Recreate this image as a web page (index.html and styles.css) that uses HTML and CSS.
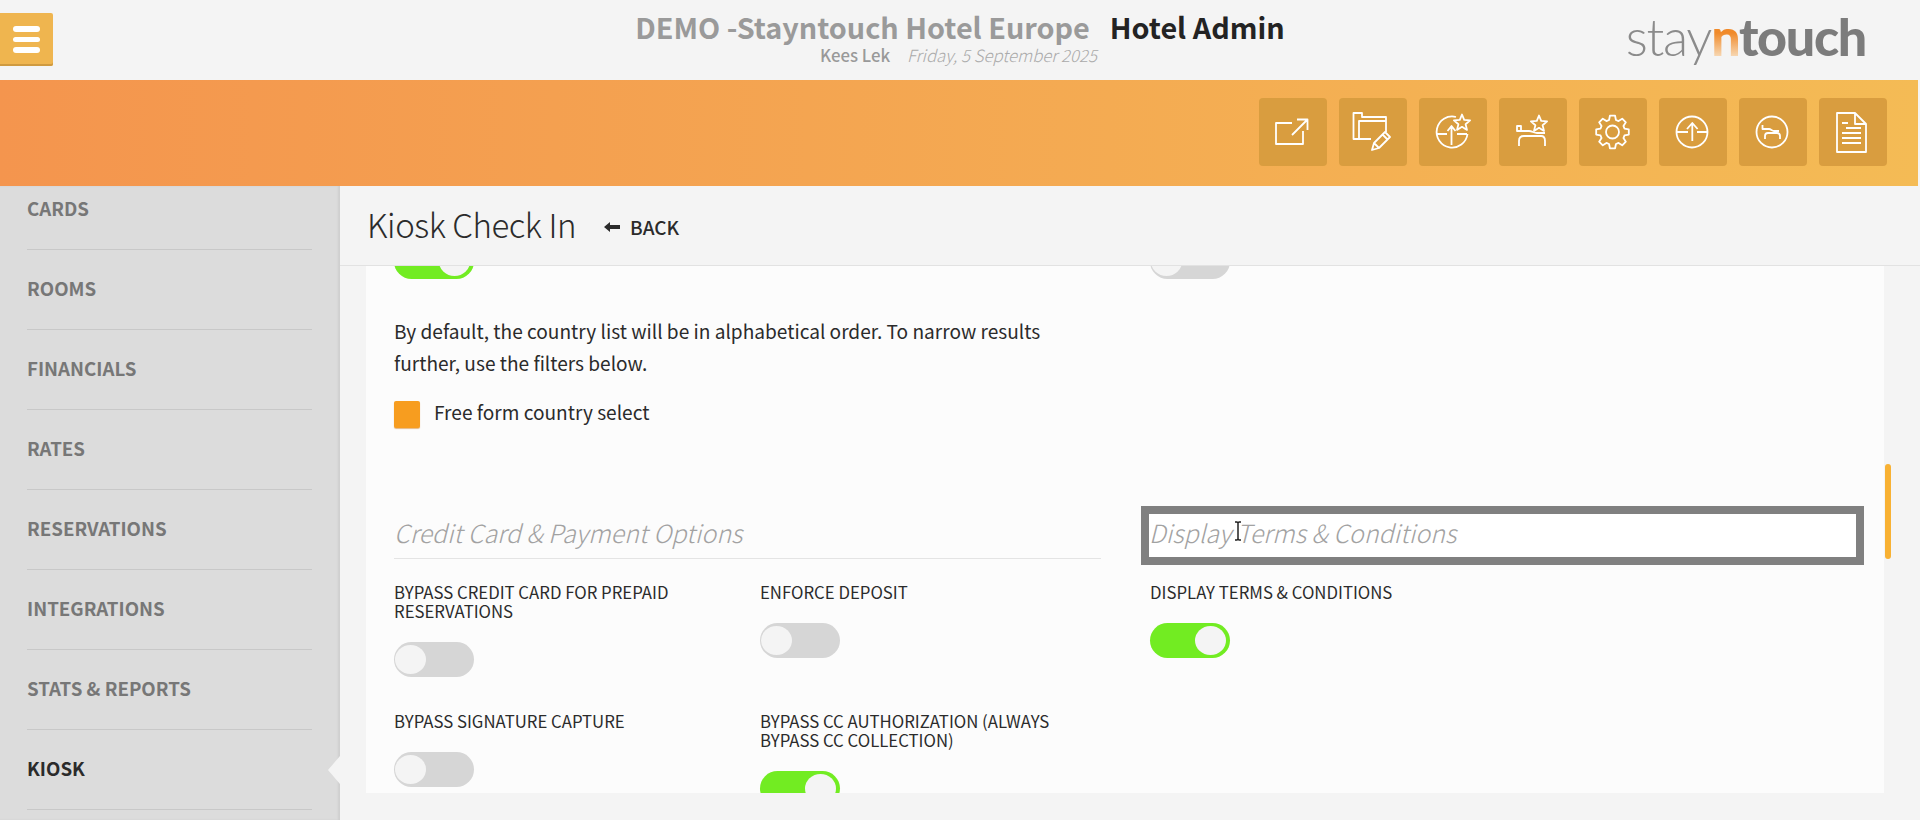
FILE: index.html
```html
<!DOCTYPE html>
<html lang="en">
<head>
<meta charset="utf-8">
<title>Kiosk Check In</title>
<link rel="stylesheet" href="styles.css">
</head>
<body>
<header class="topbar">
  <div class="topbar-left">
    <button class="menu-btn" aria-label="Menu"><span></span><span></span><span></span></button>
  </div>
  <div class="titles">
    <div class="title-line"><span class="hotel">DEMO -Stayntouch Hotel Europe</span><span class="app">Hotel Admin</span></div>
    <div class="sub-line"><span class="user">Kees Lek</span><span class="date">Friday, 5 September 2025</span></div>
  </div>
  <div class="logo"><span class="logo-stay">stay</span><span class="logo-n">n</span><span class="logo-touch">touch</span></div>
</header>

<div class="band">
  <a class="tool"><svg viewBox="0 0 68 68"><path d="M33 25H17v21h27V33M33 37 48 22M38 21.500h10.500V32"/></svg></a>
  <a class="tool"><svg viewBox="0 0 68 68"><path d="M32 41H14.500V15H23v4h24v15M20 41V23h27"/><path d="M33 52l2-7 11-11 5 5-11 11zM35 45l5 5M43.500 36.500l5 5"/></svg></a>
  <a class="tool"><svg viewBox="0 0 68 68"><path d="M37 19A15.500 15.500 0 1 0 48.500 36M18 36h10M38 36h10M32.500 47V28M28.500 33l4-5 4 5"/><path d="M43 16.500l2.200 5.400 5.900.5-4.500 3.800 1.400 5.700-5-3.100-5 3.100 1.400-5.700-4.500-3.800 5.900-.5z"/></svg></a>
  <a class="tool"><svg viewBox="0 0 68 68"><path d="M18 28h4v5h-4zM22 33h8c3 0 5 2 8 2h8M20 48v-5c0-3 2-5 5-5h17c3 0 4 2 4 5v5"/><path d="M40 17.500l2.200 5.400 5.900.5-4.500 3.800 1.400 5.700-5-3.100-5 3.100 1.400-5.700-4.500-3.800 5.900-.5z"/></svg></a>
  <a class="tool"><svg viewBox="0 0 68 68"><circle cx="33.500" cy="34" r="6.500"/><path d="M30.050 21.980 30.920 17.700H36.080L36.950 21.980 39.560 23.070 43.200 20.650 46.850 24.300 44.430 27.940 45.520 30.550 49.800 31.420V36.580L45.520 37.450 44.430 40.060 46.850 43.700 43.200 47.350 39.560 44.930 36.950 46.020 36.080 50.300H30.920L30.050 46.020 27.440 44.930 23.800 47.350 20.150 43.700 22.570 40.060 21.480 37.450 17.200 36.580V31.420L21.480 30.550 22.570 27.940 20.150 24.300 23.800 20.650 27.440 23.070z"/></svg></a>
  <a class="tool"><svg viewBox="0 0 68 68"><circle cx="33" cy="34" r="15.500"/><path d="M18 34h11M38 34h11M33.300 43V25.500M28 31l5.300-6 5.300 6"/></svg></a>
  <a class="tool"><svg viewBox="0 0 68 68"><circle cx="33" cy="34" r="15.500"/><path d="M23.500 27v4h3M24 31h6c2 0 3 2 5 2h5M26 41v-3c0-2 1-3 3-3h9c2 0 3 1 3 3v3"/></svg></a>
  <a class="tool"><svg viewBox="0 0 68 68"><path d="M18 15h18l11 11v28H18zM36 15v11h11M23 25h6M27 30h15M23 35h19M23 40h19M23 45h19"/></svg></a>
</div>

<div class="main">
  <nav class="sidebar">
    <a class="nav-item">CARDS</a>
    <a class="nav-item">ROOMS</a>
    <a class="nav-item">FINANCIALS</a>
    <a class="nav-item">RATES</a>
    <a class="nav-item">RESERVATIONS</a>
    <a class="nav-item">INTEGRATIONS</a>
    <a class="nav-item">STATS &amp; REPORTS</a>
    <a class="nav-item active">KIOSK</a>
  </nav>
  <section class="page">
    <div class="page-head">
      <h1>Kiosk Check In</h1>
      <a class="back"><svg class="back-arrow" viewBox="0 0 16 12"><path d="M0 6 6 1v3h10v4H6v3z"/></svg>BACK</a>
    </div>
    <div class="card">
      <div class="card-scroll">
        <div class="columns top-row">
          <div class="col-left">
            <span class="toggle on"></span>
            <p class="note">By default, the country list will be in alphabetical order. To narrow results further, use the filters below.</p>
            <label class="check"><span class="box"></span>Free form country select</label>
          </div>
          <div class="col-right"><span class="toggle"></span></div>
        </div>
        <div class="columns options">
          <div class="col-left">
            <h2 class="section">Credit Card &amp; Payment Options</h2>
            <div class="fields">
              <div class="field">
                <div class="label">BYPASS CREDIT CARD FOR PREPAID RESERVATIONS</div>
                <span class="toggle"></span>
              </div>
              <div class="field">
                <div class="label">ENFORCE DEPOSIT</div>
                <span class="toggle"></span>
              </div>
              <div class="field">
                <div class="label">BYPASS SIGNATURE CAPTURE</div>
                <span class="toggle"></span>
              </div>
              <div class="field">
                <div class="label">BYPASS CC AUTHORIZATION (ALWAYS BYPASS CC COLLECTION)</div>
                <span class="toggle on"></span>
              </div>
            </div>
          </div>
          <div class="col-right">
            <h2 class="section focused">Display Terms &amp; Conditions<svg class="ibeam" viewBox="0 0 10 20"><path d="M2 1h2l1 1 1-1h2M5 2v16M2 19h2l1-1 1 1h2"/></svg></h2>
            <div class="field">
              <div class="label">DISPLAY TERMS &amp; CONDITIONS</div>
              <span class="toggle on"></span>
            </div>
          </div>
        </div>
      </div>
    </div>
    <div class="scrollbar"></div>
  </section>
</div>
</body>
</html>
```
FILE: styles.css
```css
* { box-sizing: border-box; }
html, body { height: 100%; }
body {
  margin: 0;
  height: 820px;
  overflow: hidden;
  background: #f4f4f4;
  font-family: "Noto Sans CJK SC", "Noto Sans", sans-serif;
  color: #2b2b2b;
  display: flex;
  flex-direction: column;
}

/* top bar */
.topbar {
  height: 80px;
  flex: none;
  display: grid;
  grid-template-columns: 1fr auto 1fr;
  background: #f4f4f4;
}
.topbar-left { padding-top: 13px; }
.menu-btn {
  width: 53px;
  height: 53px;
  border: 0;
  padding: 0 0 0 13px;
  background: #efb54f;
  border-radius: 0 2px 2px 0;
  box-shadow: inset 0 -2px 0 #cf9a3f;
  display: flex;
  flex-direction: column;
  gap: 5px;
  justify-content: center;
}
.menu-btn span { display: block; width: 27px; height: 5.500px; background: #fff; border-radius: 3px; }
.titles { padding-top: 9px; text-align: center; }
.title-line { display: flex; gap: 20px; font-size: 28.800px; line-height: 36px; font-weight: 700; }
.hotel { color: #9a9a9a; }
.app { color: #232323; }
.sub-line { display: flex; justify-content: center; gap: 17px; padding-right: 3px; font-size: 16.800px; line-height: 20px; }
.user { color: #999; font-weight: 500; }
.date { color: #aaa; font-style: italic; font-weight: 300; }
.logo {
  justify-self: end;
  padding: 5px 54px 0 0;
  font-family: Lato, sans-serif;
  font-size: 52px;
  line-height: 62px;
  letter-spacing: -1.300px;
  color: #7c7c7c;
}
.logo-stay { font-weight: 300; color: #8b8b8b; }
.logo-n {
  font-weight: 900;
  background: linear-gradient(180deg, #f08a2a 45%, #f7dcbb 85%);
  -webkit-background-clip: text;
  background-clip: text;
  color: transparent;
}
.logo-touch { font-weight: 900; }

/* orange band */
.band {
  height: 106px;
  flex: none;
  display: flex;
  justify-content: flex-end;
  gap: 12px;
  margin-right: 2px;
  padding: 18px 31px 0 0;
  background: linear-gradient(90deg, #f4954e 0%, #f4bb55 100%);
}
.tool {
  width: 68px;
  height: 68px;
  background: #d99d3f;
  border-radius: 4px;
}
.tool svg { display: block; width: 68px; height: 68px; fill: none; stroke: #fff; stroke-width: 1.800; stroke-linejoin: round; }

/* main */
.main { flex: 1; min-height: 0; display: flex; }
.sidebar {
  width: 340px;
  flex: none;
  overflow: hidden;
  background: #dcdcdc;
  box-shadow: inset -2px 0 2px #cfcfcf;
  padding: 0 28px 0 27px;
}
.nav-item {
  display: flex;
  height: 80px;
  align-items: center;
  font-size: 18.700px;
  font-weight: 600;
  color: #777;
  border-bottom: 1px solid #c8c8c8;
  position: relative;
  padding-bottom: 5px;
}
.nav-item:first-child { height: 64px; padding-bottom: 20px; }
.nav-item.active { color: #2b2b2b; font-weight: 700; }
.nav-item.active::after {
  content: "";
  position: absolute;
  right: -28px;
  top: 26px;
  border: 14px solid transparent;
  border-left: 0;
  border-right: 12px solid #f4f4f4;
}

.page { position: relative; flex: 1; min-width: 0; padding: 0 36px 27px 26px; display: flex; flex-direction: column; }
.page-head {
  flex: none;
  height: 80px;
  margin-left: -26px;
  margin-right: -36px;
  padding: 0 0 5px 27px;
  display: flex;
  align-items: center;
  gap: 28px;
  border-bottom: 1px solid #e2e2e2;
}
h1 { margin: 2px 0 0; font-size: 33px; font-weight: 300; letter-spacing: -.45px; color: #2b2b2b; }
.back { display: flex; align-items: center; gap: 10px; margin-top: 7px; font-size: 19px; font-weight: 500; color: #2b2b2b; }
.back-arrow { width: 16px; height: 12px; fill: #2b2b2b; }

.card { flex: 1; min-height: 0; overflow: hidden; background: #fcfcfc; }
.card-scroll { margin-top: -22px; padding: 0 20px 0 28px; }
.columns { display: grid; grid-template-columns: 707px 1fr; gap: 49px; }
.col-left, .col-right { min-width: 0; }

.toggle {
  display: block;
  position: relative;
  width: 80px;
  height: 35px;
  border-radius: 18px;
  background: #d6d6d6;
}
.toggle::after {
  content: "";
  position: absolute;
  left: 1px;
  top: 3px;
  width: 31px;
  height: 29px;
  border-radius: 50%;
  background: #f4f4f4;
}
.toggle.on { background: #72ec22; }
.toggle.on::after { left: 45px; }

.note { margin: 36px 0 0; width: 680px; font-size: 19.100px; line-height: 32px; color: #2b2b2b; }
.check { display: flex; align-items: flex-start; gap: 14px; margin-top: 22px; font-size: 19.100px; line-height: 22px; color: #2b2b2b; }
.box { width: 26px; height: 27px; background: #f79d1f; border-radius: 2px; box-shadow: 0 1px 1px #e6b780; }

.options { margin-top: 78px; }
.section {
  margin: 0;
  font-size: 25px;
  line-height: 34px;
  height: 53px;
  padding: 9px 0 0;
  font-weight: 300;
  font-style: italic;
  color: #a2a2a2;
  border-bottom: 1px solid #e4e4e4;
}
.section.focused {
  position: relative;
  height: 59px;
  margin: 0 0 -6px -9px;
  width: 723px;
  padding: 0;
  line-height: 37px;
  border: 8px solid #808080;
  background: #fff;
}
.ibeam {
  position: absolute;
  left: 84px;
  top: 7px;
  width: 10px;
  height: 20px;
  fill: none;
  stroke: #222;
  stroke-width: 1.500;
}
.fields { display: grid; grid-template-columns: 366px 1fr; }
.field { padding-top: 24px; height: 129px; }
.label { font-size: 16.750px; line-height: 19px; min-height: 19px; color: #2b2b2b; margin-bottom: 21px; }

.scrollbar {
  position: absolute;
  right: 29px;
  top: 278px;
  width: 6px;
  height: 95px;
  border-radius: 3px;
  background: #f8b133;
}
```
